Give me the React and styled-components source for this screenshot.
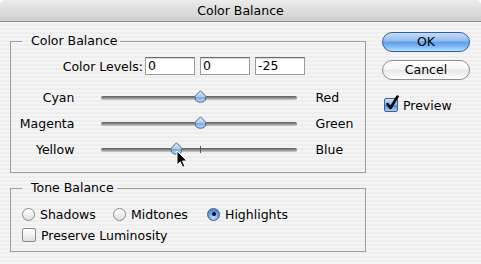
import React from "react";
import styled, { createGlobalStyle } from "styled-components";

const GlobalStyle = createGlobalStyle`
  html, body {
    margin: 0;
    padding: 0;
    background: #ffffff;
  }
  body {
    font-family: "DejaVu Sans", "Liberation Sans", sans-serif;
    font-size: 12.5px;
    color: #000;
  }
`;

const Window = styled.div`
  position: relative;
  width: 481px;
  height: 264px;
  overflow: hidden;
  border-radius: 5px 5px 0 0;
  background: repeating-linear-gradient(
    to bottom,
    #eeeeee 0px,
    #eeeeee 2px,
    #f4f4f4 2px,
    #f4f4f4 4px
  );
`;

const TitleBar = styled.div`
  height: 21px;
  line-height: 22px;
  text-align: center;
  font-size: 12.5px;
  border-bottom: 1px solid #8c8c8c;
  background: linear-gradient(#ececec, #dcdcdc 50%, #cfcfcf);
`;

const Content = styled.div`
  display: flex;
  padding-left: 10px;
`;

const LeftColumn = styled.div`
  width: 356px;
`;

const RightColumn = styled.div`
  display: flex;
  flex-direction: column;
  margin-left: 16px;
  padding-top: 10px;
`;

const Group = styled.fieldset`
  margin: ${(p) => p.$top}px 0 0;
  padding: 0 0 ${(p) => p.$bottom}px;
  border: 1px solid #9d9d9d;
  min-width: 0;
`;

const Legend = styled.legend`
  margin-left: 11px;
  padding: 0 3px 0 9px;
  line-height: 16px;
  height: 16px;
`;

const LevelsRow = styled.div`
  display: flex;
  align-items: center;
  margin-top: 8px;
  height: 18px;
`;

const LevelsLabel = styled.span`
  width: 132px;
  text-align: right;
  margin-right: 2px;
`;

const LevelInput = styled.div`
  box-sizing: border-box;
  width: 50px;
  height: 18px;
  margin-right: 5px;
  padding-left: 2px;
  line-height: 16px;
  background: #fff;
  border: 1px solid #9a9a9a;
  border-top-color: #6e6e6e;
  box-shadow: inset 0 1px 0 #d8d8d8;
`;

const Sliders = styled.div`
  margin-top: 9px;
`;

const SliderRow = styled.div`
  display: flex;
  align-items: center;
  height: 26px;
`;

const SideLabel = styled.span`
  width: ${(p) => p.$width}px;
  text-align: ${(p) => p.$align};
  margin-right: ${(p) => p.$gap}px;
`;

const TrackArea = styled.div`
  position: relative;
  width: 198px;
  height: 26px;
  margin-right: 18px;
  display: flex;
  align-items: center;
`;

const Groove = styled.div`
  width: 100%;
  height: 4px;
  margin-top: 1px;
  border-radius: 2px;
  background: linear-gradient(#5c5c5c, #8f8f8f 50%, #cfcfcf);
`;

const Tick = styled.div`
  position: absolute;
  left: 99px;
  top: 10px;
  width: 1px;
  height: 7px;
  background: #555;
`;

const Thumb = styled.svg`
  position: absolute;
  top: 6px;
  margin-left: -6px;
`;

const OptionsRow = styled.div`
  display: grid;
  grid-template-columns: ${(p) => p.$columns};
  margin-top: ${(p) => p.$top}px;
  padding-left: 11px;
  height: 16px;
  align-items: center;
`;

const Option = styled.label`
  display: flex;
  align-items: center;
  gap: 5px;
  white-space: nowrap;
`;

const Radio = styled.span`
  flex-shrink: 0;
  box-sizing: border-box;
  width: 13px;
  height: 13px;
  border-radius: 50%;
  display: flex;
  align-items: center;
  justify-content: center;
  border: 1px solid ${(p) => (p.$on ? "#3f5f8e" : "#8a8a8a")};
  background: ${(p) =>
    p.$on
      ? "radial-gradient(circle at 50% 75%, #bfe0ff, #5d97de 60%, #3f78c6)"
      : "linear-gradient(#ffffff, #f0f0f0 50%, #dedede)"};
  &::after {
    content: "";
    display: ${(p) => (p.$on ? "block" : "none")};
    width: 4px;
    height: 4px;
    border-radius: 50%;
    background: #000;
  }
`;

const Box = styled.span`
  flex-shrink: 0;
  position: relative;
  box-sizing: border-box;
  width: 14px;
  height: 14px;
  border-radius: 2px;
  border: 1px solid ${(p) => (p.$on ? "#3f5f8e" : "#8a8a8a")};
  background: ${(p) =>
    p.$on
      ? "linear-gradient(#cfe4fb, #7fb0ea 50%, #4f8ad8 55%, #a8d2ff)"
      : "linear-gradient(#ffffff, #f2f2f2 50%, #dedede)"};
`;

const Check = styled.svg`
  position: absolute;
  left: 0px;
  top: -4px;
`;

const Button = styled.div`
  box-sizing: border-box;
  width: 88px;
  height: 20px;
  margin-bottom: 8px;
  border-radius: 10px;
  text-align: center;
  line-height: 18px;
  border: 1px solid ${(p) => (p.$primary ? "#34609a" : "#8e8e8e")};
  background: ${(p) =>
    p.$primary
      ? "linear-gradient(#c4dcf6, #8fbcef 45%, #5c9ee8 50%, #7fb8f4 75%, #b6e0ff)"
      : "linear-gradient(#ffffff, #f6f6f6 45%, #e6e6e6 50%, #f2f2f2 75%, #ffffff)"};
`;

const PreviewRow = styled.label`
  display: flex;
  align-items: center;
  gap: 5px;
  margin-top: 9px;
  margin-left: 2px;
  height: 16px;
`;

const Cursor = styled.svg`
  position: absolute;
  left: 176px;
  top: 150px;
`;

function SliderThumb({ value }) {
  const left = ((value + 100) / 200) * 198;
  return (
    <Thumb width="13" height="13" viewBox="0 0 13 13" style={{ left }}>
      <defs>
        <linearGradient id="thumbFill" x1="0" y1="0" x2="0" y2="1">
          <stop offset="0" stopColor="#e4edf9" />
          <stop offset="0.5" stopColor="#b3cbeb" />
          <stop offset="0.56" stopColor="#7aa6dd" />
          <stop offset="1" stopColor="#b9dbfb" />
        </linearGradient>
      </defs>
      <path
        d="M6.5 0.8 L11.8 6.2 L11.8 8 C11.8 11 9.5 12.2 6.5 12.2 C3.5 12.2 1.2 11 1.2 8 L1.2 6.2 Z"
        fill="url(#thumbFill)"
        stroke="#4f6685"
        strokeWidth="1"
      />
    </Thumb>
  );
}

function Slider({ left, right, value }) {
  return (
    <SliderRow>
      <SideLabel $width={64} $align="right" $gap={27}>
        {left}
      </SideLabel>
      <TrackArea>
        <Groove />
        {value !== 0 && <Tick />}
        <SliderThumb value={value} />
      </TrackArea>
      <SideLabel $width={50} $align="left" $gap={0}>
        {right}
      </SideLabel>
    </SliderRow>
  );
}

export default function App() {
  const levels = [0, 0, -25];
  const sliders = [
    { left: "Cyan", right: "Red", value: levels[0] },
    { left: "Magenta", right: "Green", value: levels[1] },
    { left: "Yellow", right: "Blue", value: levels[2] },
  ];

  return (
    <>
      <GlobalStyle />
      <Window>
        <TitleBar>Color Balance</TitleBar>
        <Content>
          <LeftColumn>
            <Group $top={11} $bottom={10}>
              <Legend>Color Balance</Legend>
              <LevelsRow>
                <LevelsLabel>Color Levels:</LevelsLabel>
                {levels.map((v, i) => (
                  <LevelInput key={i}>{v}</LevelInput>
                ))}
              </LevelsRow>
              <Sliders>
                {sliders.map((s) => (
                  <Slider key={s.left} {...s} />
                ))}
              </Sliders>
            </Group>
            <Group $top={7} $bottom={8}>
              <Legend>Tone Balance</Legend>
              <OptionsRow $top={10} $columns="91px 94px auto">
                <Option>
                  <Radio />
                  Shadows
                </Option>
                <Option>
                  <Radio />
                  Midtones
                </Option>
                <Option>
                  <Radio $on />
                  Highlights
                </Option>
              </OptionsRow>
              <OptionsRow $top={5} $columns="auto">
                <Option>
                  <Box />
                  Preserve Luminosity
                </Option>
              </OptionsRow>
            </Group>
          </LeftColumn>
          <RightColumn>
            <Button $primary>OK</Button>
            <Button>Cancel</Button>
            <PreviewRow>
              <Box $on>
                <Check width="16" height="18" viewBox="0 0 16 18">
                  <path
                    d="M2.5 9 L5.5 13 L12.5 1.5"
                    fill="none"
                    stroke="#000"
                    strokeWidth="2.6"
                    strokeLinecap="round"
                    strokeLinejoin="round"
                  />
                </Check>
              </Box>
              Preview
            </PreviewRow>
          </RightColumn>
        </Content>
        <Cursor width="12" height="19" viewBox="0 0 12 19">
          <path
            d="M1 1 L1 15 L4.3 11.8 L6.6 17.2 L8.8 16.3 L6.6 11 L11 11 Z"
            fill="#000"
            stroke="#fff"
            strokeWidth="1"
            strokeLinejoin="round"
          />
        </Cursor>
      </Window>
    </>
  );
}
